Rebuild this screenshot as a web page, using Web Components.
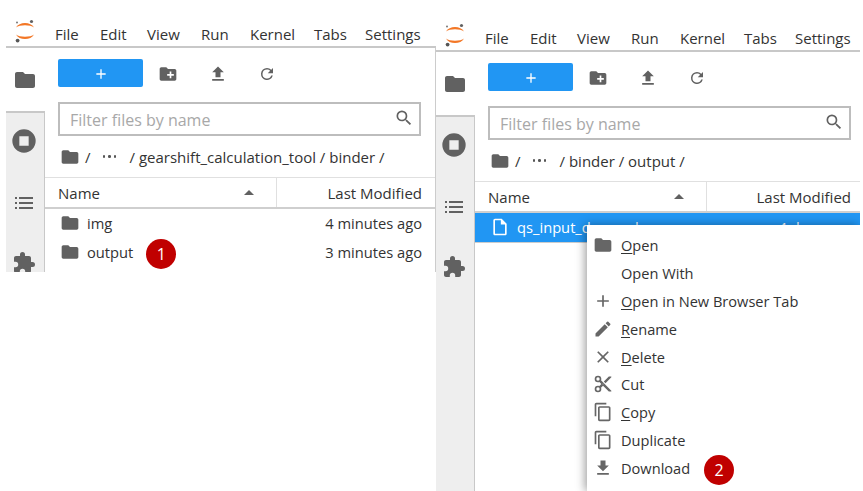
<!DOCTYPE html>
<html>
<head>
<meta charset="utf-8">
<style>
  html, body { margin: 0; padding: 0; background: #fff; width: 863px; height: 491px; overflow: hidden; }
  body { display: flex; font-family: "Open Sans", "Noto Sans", sans-serif; }
</style>
</head>
<body>
<jp-window style="--w:430px; --h:272px; --top:0px; --ml:6px; --gut:13px" path="gearshift_calculation_tool / binder /" bordered>
  <file-row name="img" time="4 minutes ago" kind="folder"></file-row>
  <file-row name="output" time="3 minutes ago" kind="folder" badge="1"></file-row>
</jp-window>

<jp-window style="--w:424px; --h:491px; --top:4px; --ml:0px; --gut:9px" path="binder / output /">
  <file-row name="qs_input_demand.csv" time="4 days ago" kind="file" selected></file-row>
  <context-menu slot="over">
    <menu-row icon="folder" mark="O" label="pen"></menu-row>
    <menu-row label="Open With"></menu-row>
    <menu-row icon="plus" mark="O" label="pen in New Browser Tab"></menu-row>
    <menu-row icon="pencil" mark="R" label="ename"></menu-row>
    <menu-row icon="close" mark="D" label="elete"></menu-row>
    <menu-row icon="cut" label="Cut"></menu-row>
    <menu-row icon="copy" mark="C" label="opy"></menu-row>
    <menu-row icon="copy" label="Duplicate"></menu-row>
    <menu-row icon="download" label="Download" badge="2"></menu-row>
  </context-menu>
</jp-window>

<script>
// material paths used by the jupyterlab toolbar and menus
const ICONS = {
  folder: '<path d="M10 4H4c-1.1 0-2 .9-2 2v12c0 1.1.9 2 2 2h16c1.1 0 2-.9 2-2V8c0-1.1-.9-2-2-2h-8l-2-2z"/>',
  newfolder: '<path d="M20 6h-8l-2-2H4c-1.1 0-2 .9-2 2v12c0 1.1.9 2 2 2h16c1.1 0 2-.9 2-2V8c0-1.1-.9-2-2-2zm-1 8h-3v3h-2v-3h-3v-2h3V9h2v3h3v2z"/>',
  upload: '<path d="M5 20h14v-2H5v2zm0-10h4v6h6v-6h4l-7-7-7 7z"/>',
  refresh: '<path d="M17.65 6.35A7.95 7.95 0 0 0 12 4a8 8 0 1 0 7.73 10h-2.08A6 6 0 1 1 12 6c1.66 0 3.14.69 4.22 1.78L13 11h7V4l-2.35 2.35z"/>',
  search: '<path d="M15.5 14h-.79l-.28-.27A6.47 6.47 0 0 0 16 9.5 6.5 6.5 0 1 0 9.5 16c1.61 0 3.09-.59 4.23-1.57l.27.28v.79l5 4.99L20.49 19l-4.99-5zm-6 0C7.01 14 5 11.99 5 9.5S7.01 5 9.5 5 14 7.01 14 9.5 11.99 14 9.5 14z"/>',
  stop: '<path fill-rule="evenodd" d="M12 2a10 10 0 1 0 0 20 10 10 0 0 0 0-20zM8 8h8v8H8z"/>',
  list: '<path d="M7 6h14v2H7zM7 11h14v2H7zM7 16h14v2H7zM3 6h2v2H3zM3 11h2v2H3zM3 16h2v2H3z"/>',
  puzzle: '<path d="M20.5 11H19V7c0-1.1-.9-2-2-2h-4V3.5a2.5 2.5 0 0 0-5 0V5H4c-1.1 0-2 .9-2 2v3.8h1.5a2.7 2.7 0 0 1 0 5.4H2V20c0 1.1.9 2 2 2h3.8v-1.5a2.7 2.7 0 0 1 5.4 0V22H17c1.1 0 2-.9 2-2v-4h1.5a2.5 2.5 0 0 0 0-5z"/>',
  plus: '<path d="M19 13h-6v6h-2v-6H5v-2h6V5h2v6h6v2z"/>',
  pencil: '<path d="M3 17.25V21h3.75L17.81 9.94l-3.75-3.75L3 17.25zM20.71 7.04a1 1 0 0 0 0-1.41l-2.34-2.34a1 1 0 0 0-1.41 0l-1.83 1.83 3.75 3.75 1.83-1.83z"/>',
  close: '<path d="M19 6.41 17.59 5 12 10.59 6.41 5 5 6.41 10.59 12 5 17.59 6.41 19 12 13.41 17.59 19 19 17.59 13.41 12z"/>',
  cut: '<path d="M9.64 7.64c.23-.5.36-1.05.36-1.64a4 4 0 1 0-4 4c.59 0 1.14-.13 1.64-.36L10 12l-2.36 2.36A3.9 3.9 0 0 0 6 14a4 4 0 1 0 4 4c0-.59-.13-1.14-.36-1.64L12 14l7 7h3v-1L9.64 7.64zM6 8a2 2 0 1 1 0-4 2 2 0 0 1 0 4zm0 12a2 2 0 1 1 0-4 2 2 0 0 1 0 4zm6-7.5a.5.5 0 1 1 0-1 .5.5 0 0 1 0 1zM19 3l-6 6 2 2 7-7V3z"/>',
  copy: '<path d="M16 1H4c-1.1 0-2 .9-2 2v14h2V3h12V1zm3 4H8c-1.1 0-2 .9-2 2v14c0 1.1.9 2 2 2h11c1.1 0 2-.9 2-2V7c0-1.1-.9-2-2-2zm0 16H8V7h11v14z"/>',
  download: '<path d="M19 9h-4V3H9v6H5l7 7 7-7zM5 18v2h14v-2H5z"/>',
  file: '<path d="M14 2H6c-1.1 0-2 .9-2 2v16c0 1.1.9 2 2 2h12c1.1 0 2-.9 2-2V8l-6-6zm4 18H6V4h7v5h5v11z"/>'
};

function icon(name, size, color) {
  return `<svg width="${size}" height="${size}" viewBox="0 0 24 24" fill="${color}" style="display:block;flex:none">${ICONS[name]}</svg>`;
}

class JpWindow extends HTMLElement {
  constructor() {
    super();
    this.attachShadow({ mode: "open" });
  }

  connectedCallback() {
    const menus = ["File", "Edit", "View", "Run", "Kernel", "Tabs", "Settings"];
    const path = this.getAttribute("path");
    const bordered = this.hasAttribute("bordered");

    this.shadowRoot.innerHTML = `
      <style>
        :host {
          display: flex; flex-direction: column; flex: none; box-sizing: border-box;
          width: var(--w); height: var(--h); margin-left: var(--ml); padding-top: var(--top);
          color: #333; font-size: 14px; position: relative; overflow: hidden;
        }
        header {
          height: 48px; box-sizing: border-box; border-bottom: 2px solid #c8c8c8;
          display: flex; align-items: flex-end; flex: none;
        }
        .logo { width: 20px; height: 24px; margin: 0 0 3px 9px; flex: none; }
        nav { display: flex; margin-left: 20px; height: 24px; align-items: center; font-size: 15px; }
        nav span { display: block; white-space: nowrap; }
        .body { flex: 1; display: flex; min-height: 0; ${bordered ? "border-right: 1px solid #ccc;" : ""} }
        aside { width: 39px; flex: none; display: flex; flex-direction: column; align-items: center; }
        .act { height: 63px; width: 39px; display: flex; justify-content: center; align-items: center; box-sizing: border-box; flex: none; padding-right: 2px; }
        .rest {
          flex: 1; background: #eee; border-top: 2px solid #c8c8c8; width: 39px; box-sizing: border-box;
          border-right: 1px solid #c8c8c8; display: flex; flex-direction: column; align-items: center;
          overflow: hidden; padding-right: 2px;
        }
        .rest div { display: flex; justify-content: center; flex: none; }
        main { flex: 1; min-width: 0; display: flex; flex-direction: column; }
        .tools { display: flex; align-items: center; height: 28px; margin: 11px 0 0 13px; flex: none; }
        .tools svg { margin-top: 2px; }
        .new {
          width: 85px; height: 28px; background: #2196f3; border-radius: 2px;
          display: flex; justify-content: center; align-items: center; flex: none;
        }
        .tb { width: 50px; display: flex; justify-content: center; flex: none; }
        .filter {
          margin: 15px 0 0 13px; width: 363px; height: 34px; box-sizing: border-box; border: 2px solid #bdbdbd;
          display: flex; align-items: center; justify-content: space-between; padding: 0 5px 0 10px;
          color: #a8a8a8; font-size: 16px; flex: none;
        }
        .filter span { padding-top: 2px; }
        .filter svg { margin-bottom: 2px; }
        .crumbs { display: flex; align-items: center; height: 41px; margin-left: 15px; flex: none; font-size: 15px; color: #333; }
        .crumbs .lbl { display: flex; align-items: center; }
        .crumbs .sl { margin-left: 5px; }
        .crumbs .dots { margin-left: 12px; width: 15px; display: flex; gap: 3px; }
        .crumbs .dots i { width: 2.5px; height: 2.5px; background: #555; border-radius: 50%; display: block; }
        .crumbs .pth { margin-left: 12px; }
        .head {
          height: 32px; box-sizing: border-box; border-top: 1px solid #e0e0e0; border-bottom: 2px solid #cfcfcf;
          display: flex; align-items: center; font-size: 15px; flex: none;
        }
        .head .n {
          width: 232px; box-sizing: border-box; padding: 0 22px 0 13px; display: flex;
          justify-content: space-between; align-items: center; height: 100%; border-right: 1px solid #e0e0e0;
        }
        .head .m { flex: 1; text-align: right; padding: 0 var(--gut) 0 0; white-space: nowrap; overflow: hidden; }
        .caret { width: 0; height: 0; border-left: 5px solid transparent; border-right: 5px solid transparent; border-bottom: 5px solid #616161; }
      </style>
      <header>
        <svg class="logo" viewBox="0 0 20 24">
          <path d="M1 8.5C4 2.5 16 2.5 19 8.5 15.5 5.5 4.5 5.5 1 8.5Z" fill="#f37726"/>
          <path d="M1 15.5C4 21.5 16 21.5 19 15.5 15.5 18.5 4.5 18.5 1 15.5Z" fill="#f37726"/>
          <circle cx="16.5" cy="2.5" r="1.6" fill="#616161"/>
          <circle cx="2.6" cy="21.6" r="1.9" fill="#555"/>
          <circle cx="2" cy="3.5" r="1" fill="#777"/>
        </svg>
        <nav>${menus.map(m => `<span>${m}</span>`).join("")}</nav>
      </header>
      <div class="body">
        <aside>
          <div class="act">${icon("folder", 24, "#616161")}</div>
          <div class="rest">
            <div style="margin-top:14px">${icon("stop", 28, "#616161")}</div>
            <div style="margin-top:36px">${icon("list", 24, "#616161")}</div>
            <div style="margin-top:36px">${icon("puzzle", 24, "#616161")}</div>
          </div>
        </aside>
        <main>
          <div class="tools">
            <div class="new">${icon("plus", 16, "#fff")}</div>
            <div class="tb">${icon("newfolder", 20, "#616161")}</div>
            <div class="tb" style="width:49px">${icon("upload", 20, "#616161")}</div>
            <div class="tb">${icon("refresh", 18, "#616161")}</div>
          </div>
          <div class="filter"><span>Filter files by name</span>${icon("search", 20, "#616161")}</div>
          <div class="crumbs">${icon("folder", 20, "#616161")}<div class="lbl"><span class="sl">/</span><span class="dots"><i></i><i></i><i></i></span><span class="pth">/ ${path}</span></div></div>
          <div class="head"><div class="n"><span>Name</span><span class="caret"></span></div><div class="m">Last Modified</div></div>
          <slot></slot>
        </main>
      </div>
      <slot name="over"></slot>
    `;
    // menu items sit at measured offsets, the title widths differ from the font here
    const xs = [0, 45, 92, 146, 195, 259, 310];
    this.shadowRoot.querySelectorAll("nav span").forEach((s, i) => {
      s.style.width = (i < xs.length - 1 ? xs[i + 1] - xs[i] : 60) + "px";
    });
  }
}

class FileRow extends HTMLElement {
  constructor() {
    super();
    this.attachShadow({ mode: "open" });
  }

  connectedCallback() {
    const sel = this.hasAttribute("selected");
    const color = sel ? "#fff" : "#616161";
    const badge = this.getAttribute("badge");
    this.shadowRoot.innerHTML = `
      <style>
        :host {
          display: flex; align-items: center; height: ${sel ? 30 : 29}px; box-sizing: border-box;
          padding: 0 var(--gut) 2px 15px; font-size: 14.7px; white-space: nowrap; flex: none;
          background: ${sel ? "#2196f3" : "transparent"}; color: ${sel ? "#fff" : "#333"};
          ${sel ? "border-bottom: 1px solid #ccc;" : ""}
        }
        .nm { margin-left: 7px; }
        .t { margin-left: auto; }
        status-badge { margin: 4px 0 0 13px; }
      </style>
      ${icon(this.getAttribute("kind"), 20, color)}
      <span class="nm">${this.getAttribute("name")}</span>
      ${badge ? `<status-badge>${badge}</status-badge>` : ""}
      <span class="t">${this.getAttribute("time")}</span>
    `;
  }
}

class StatusBadge extends HTMLElement {
  constructor() {
    super();
    this.attachShadow({ mode: "open" });
    this.shadowRoot.innerHTML = `
      <style>
        :host {
          display: flex; align-items: center; justify-content: center; flex: none;
          width: 30px; height: 30px; border-radius: 50%; background: #c00000;
          color: #fff; font-size: 16px; line-height: 1;
        }
      </style>
      <slot></slot>
    `;
  }
}

class ContextMenu extends HTMLElement {
  constructor() {
    super();
    this.attachShadow({ mode: "open" });
    this.shadowRoot.innerHTML = `
      <style>
        :host {
          position: absolute; left: 151px; top: 225px; width: 273px; height: 266px;
          background: #fff; box-shadow: -2px 0 9px rgba(0,0,0,.38); padding-top: 6px; box-sizing: border-box;
          display: flex; flex-direction: column;
        }
      </style>
      <slot></slot>
    `;
  }
}

class MenuRow extends HTMLElement {
  constructor() {
    super();
    this.attachShadow({ mode: "open" });
  }

  connectedCallback() {
    const ic = this.getAttribute("icon");
    const mark = this.getAttribute("mark");
    const badge = this.getAttribute("badge");
    this.shadowRoot.innerHTML = `
      <style>
        :host { display: flex; align-items: center; height: 27.9px; padding-left: 6px; font-size: 14.6px; color: #333; flex: none; }
        .ic { width: 20px; height: 20px; flex: none; margin-right: 8px; }
        u { text-underline-offset: 2px; }
        status-badge { margin: 3px 0 0 14px; }
      </style>
      <div class="ic">${ic ? icon(ic, 20, "#666") : ""}</div>
      <span>${mark ? `<u>${mark}</u>` : ""}${this.getAttribute("label")}</span>
      ${badge ? `<status-badge>${badge}</status-badge>` : ""}
    `;
  }
}

customElements.define("jp-window", JpWindow);
customElements.define("file-row", FileRow);
customElements.define("status-badge", StatusBadge);
customElements.define("context-menu", ContextMenu);
customElements.define("menu-row", MenuRow);
</script>
</body>
</html>
